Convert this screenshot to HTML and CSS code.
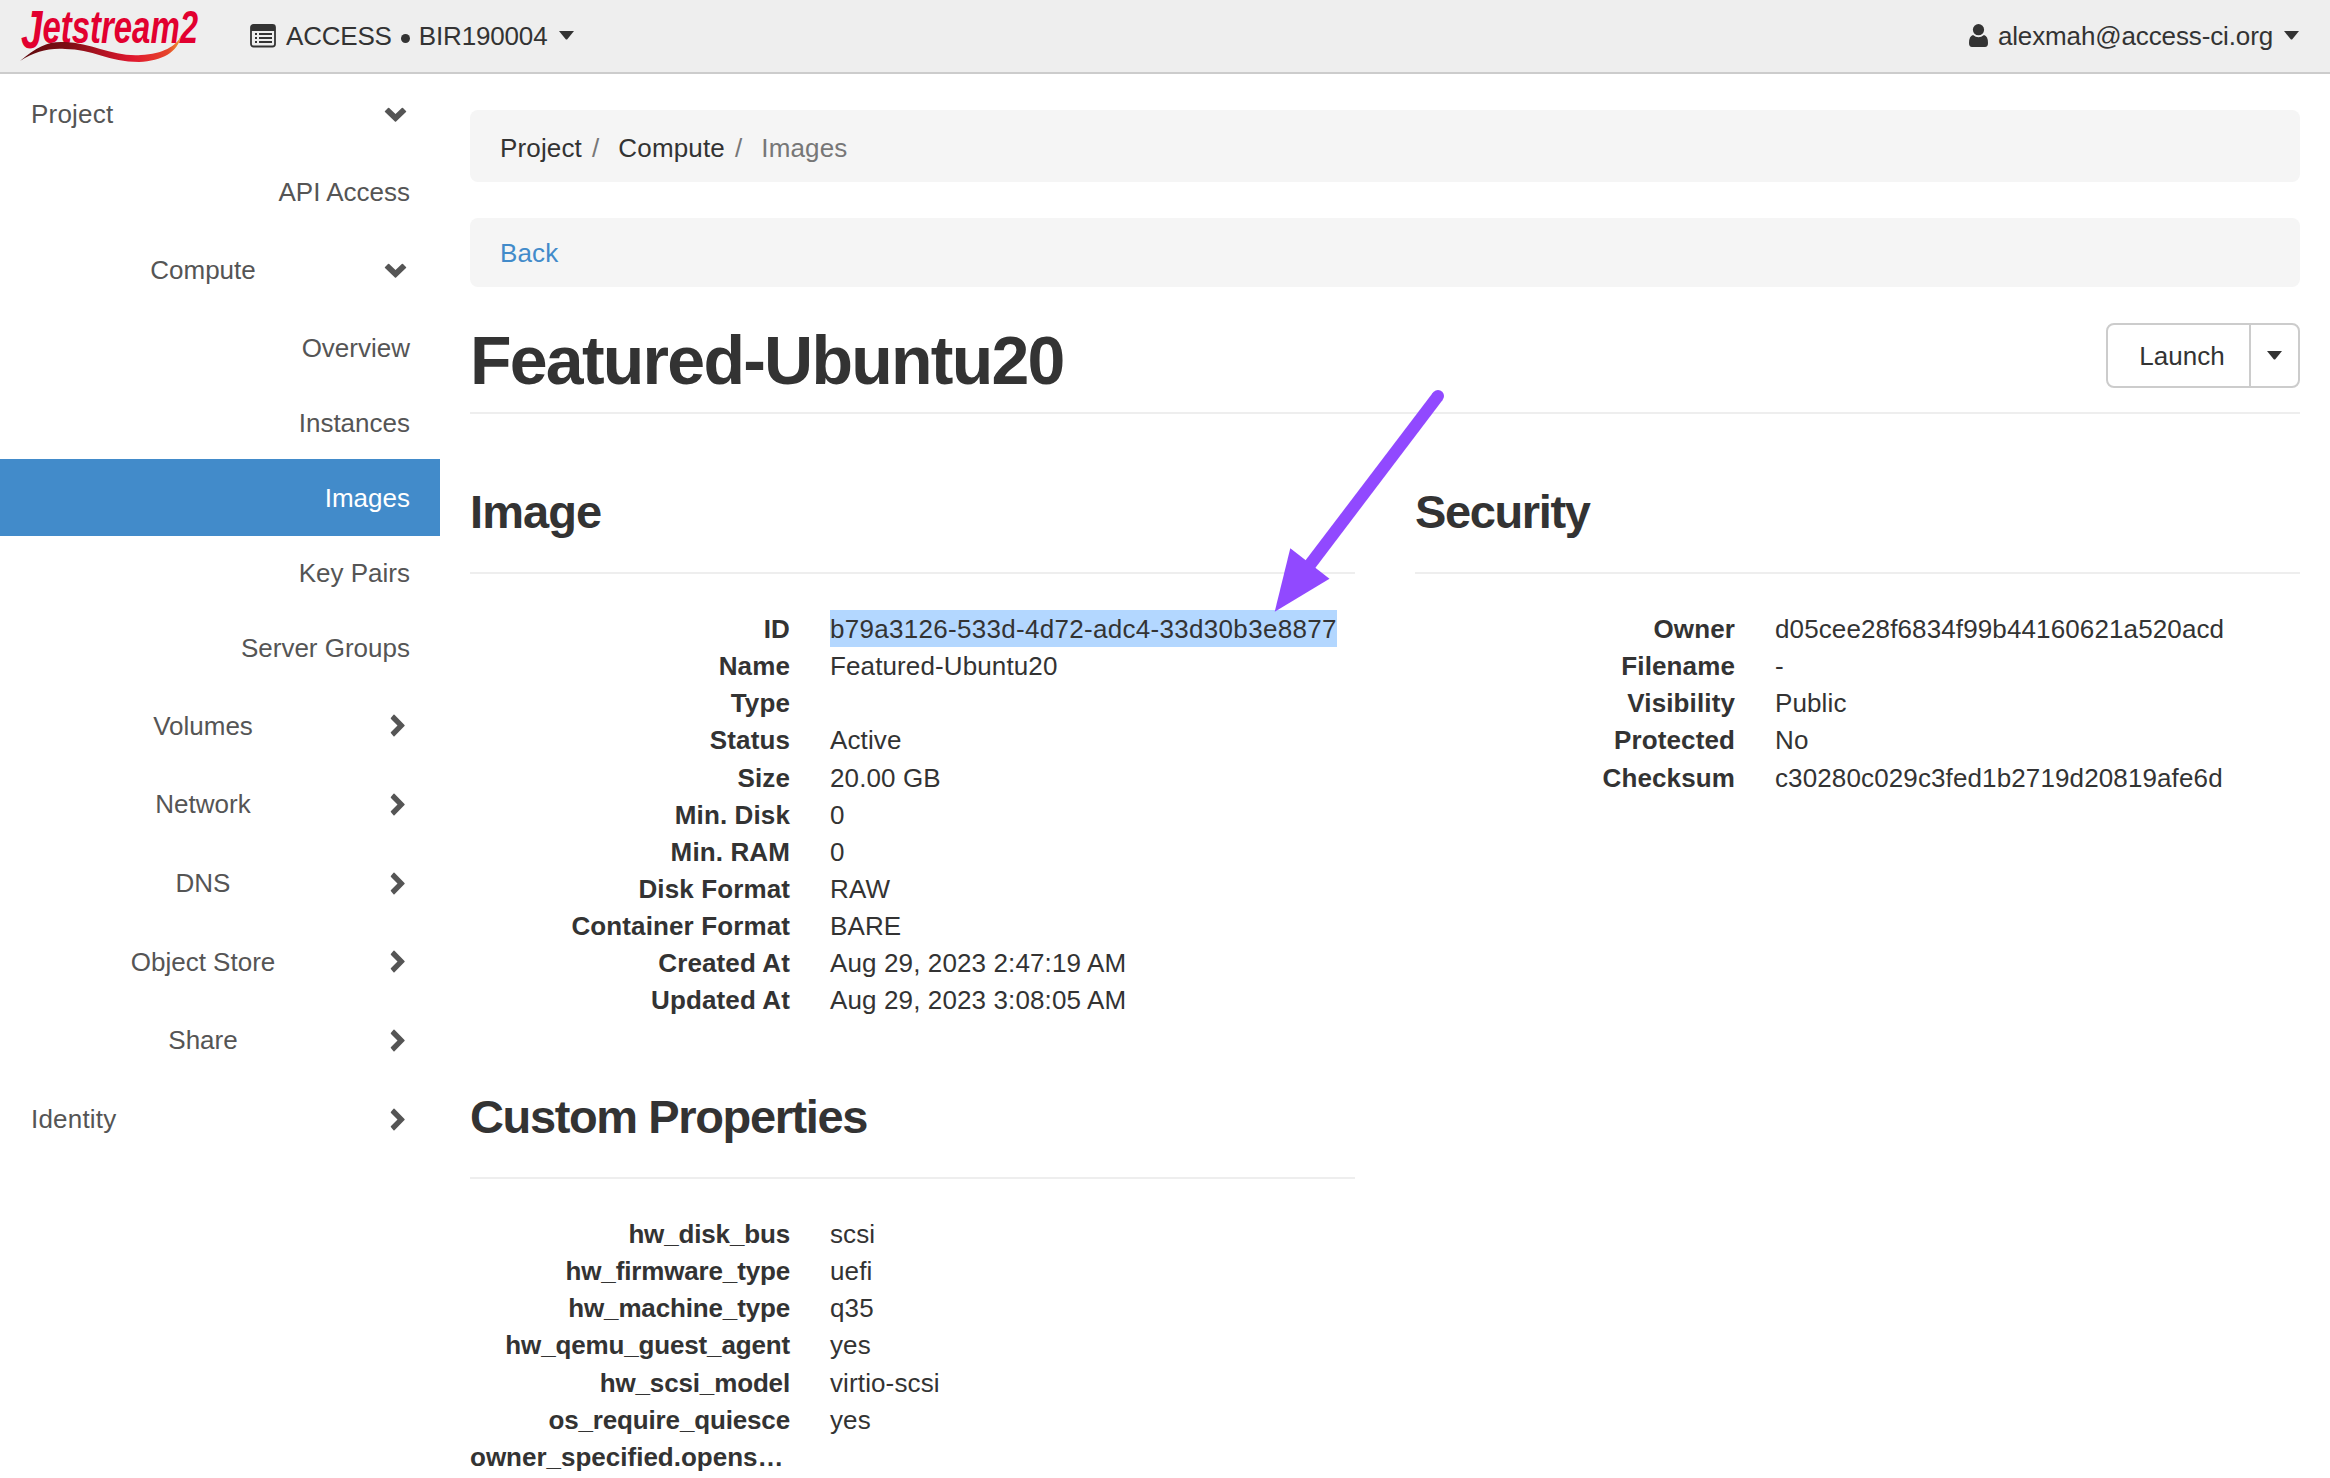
FILE: index.html
```html
<!DOCTYPE html>
<html lang="en">
<head>
<meta charset="utf-8">
<title>Featured-Ubuntu20 - Images</title>
<link rel="stylesheet" href="styles.css">
</head>
<body>
<svg class="defs" aria-hidden="true">
  <symbol id="down" viewBox="0 0 23 15"><path d="M1 4 4 1Q4.600 .4 5.200 1L11.500 7 17.800 1Q18.400 .4 19 1L22 4Q22.500 4.500 22 5L12.100 14.500Q11.500 15 10.900 14.500L1 5Q.5 4.500 1 4Z"/></symbol>
  <symbol id="right" viewBox="0 0 15 23"><path d="M1 18 7.500 11.500 1 5Q.4 4.400 1 3.800L3.500 .8Q4 .3 4.500 .8L14.500 10.900Q15 11.500 14.500 12.100L4.500 22.200Q4 22.700 3.500 22.200L1 19.200Q.4 18.600 1 18Z"/></symbol>
  <symbol id="caret" viewBox="0 0 15 9"><path d="M0 0H15L8.300 8.200Q7.500 9 6.700 8.200Z"/></symbol>
</svg>
<header class="navbar">
  <a class="brand" href="#">
    <svg width="190" height="72" viewBox="0 0 190 72" role="img" aria-label="Jetstream2">
      <defs><linearGradient id="swoosh"><stop offset="0" stop-color="#5e0b0e"/><stop offset=".3" stop-color="#7d0d14"/><stop offset=".7" stop-color="#e0182f"/><stop offset=".92" stop-color="#e6452b"/><stop offset="1" stop-color="#f0a030"/></linearGradient></defs>
      <text class="logo-text" x="3" y="43" textLength="177" lengthAdjust="spacingAndGlyphs"><tspan class="logo-j" dy="5">J</tspan><tspan dy="-5">etstream2</tspan></text>
      <path fill="url(#swoosh)" d="M2 61C20 46 30 41 47 42C74 43 95 57 123 55C145 54 158 46 163 36C160 52 144 61 121 62C91 62 74 49 47 49C29 48 17 52 2 61Z"/>
    </svg>
  </a>
  <a class="project" href="#">
    <svg width="26" height="24" viewBox="0 0 26 24"><rect x="1" y="1" width="24" height="21.500" rx="2.500" fill="none" stroke="#333" stroke-width="1.800"/><path fill="#333" d="M1 2H25V7H1ZM5 9h2v2H5zM9 9h13v2H9zM5 13h2v2H5zM9 13h13v2H9zM5 17h2v2H5zM9 17h13v2H9z"/></svg>
    <span class="domain">ACCESS</span><span class="dot"></span><span class="pname">BIR190004</span>
    <svg class="caret"><use href="#caret"/></svg>
  </a>
  <a class="user" href="#">
    <svg width="19" height="23" viewBox="0 0 19 23"><circle cx="9.500" cy="5.700" r="5.600"/><path d="M4 11Q9.500 15.500 15 11Q19 12 19 19Q19 23 16 23H3Q0 23 0 19Q0 12 4 11Z"/></svg>
    <span class="mail">alexmah@access-ci.org</span>
    <svg class="caret"><use href="#caret"/></svg>
  </a>
</header>
<div class="layout">
  <nav class="sidebar">
    <a class="panel top">Project<svg class="down"><use href="#down"/></svg></a>
    <ul class="single"><li>API Access</li></ul>
    <a class="panel"><span>Compute</span><svg class="down"><use href="#down"/></svg></a>
    <ul><li>Overview</li><li>Instances</li><li class="active">Images</li><li>Key Pairs</li><li>Server Groups</li></ul>
    <a class="panel"><span>Volumes</span><svg class="right"><use href="#right"/></svg></a>
    <a class="panel"><span>Network</span><svg class="right"><use href="#right"/></svg></a>
    <a class="panel"><span>DNS</span><svg class="right"><use href="#right"/></svg></a>
    <a class="panel"><span>Object Store</span><svg class="right"><use href="#right"/></svg></a>
    <a class="panel"><span>Share</span><svg class="right"><use href="#right"/></svg></a>
    <a class="panel top">Identity<svg class="right"><use href="#right"/></svg></a>
  </nav>
  <main class="content">
    <ol class="breadcrumb"><li>Project</li><li>Compute</li><li class="current">Images</li></ol>
    <div class="back"><a href="#">Back</a></div>
    <div class="title">
      <h1>Featured-Ubuntu20</h1>
      <div class="actions"><button>Launch</button><button class="toggle" aria-label="More"><svg class="caret"><use href="#caret"/></svg></button></div>
    </div>
    <div class="columns">
      <div>
        <section>
          <h3 class="short">Image</h3>
          <dl>
            <dt>ID</dt><dd><mark>b79a3126-533d-4d72-adc4-33d30b3e8877</mark></dd>
            <dt>Name</dt><dd>Featured-Ubuntu20</dd>
            <dt>Type</dt><dd></dd>
            <dt>Status</dt><dd>Active</dd>
            <dt>Size</dt><dd>20.00 GB</dd>
            <dt>Min. Disk</dt><dd>0</dd>
            <dt>Min. RAM</dt><dd>0</dd>
            <dt>Disk Format</dt><dd>RAW</dd>
            <dt>Container Format</dt><dd>BARE</dd>
            <dt>Created At</dt><dd>Aug 29, 2023 2:47:19 AM</dd>
            <dt>Updated At</dt><dd>Aug 29, 2023 3:08:05 AM</dd>
          </dl>
        </section>
        <section class="last">
          <h3>Custom Properties</h3>
          <dl class="custom">
            <dt>hw_disk_bus</dt><dd>scsi</dd>
            <dt>hw_firmware_type</dt><dd>uefi</dd>
            <dt>hw_machine_type</dt><dd>q35</dd>
            <dt>hw_qemu_guest_agent</dt><dd>yes</dd>
            <dt>hw_scsi_model</dt><dd>virtio-scsi</dd>
            <dt>os_require_quiesce</dt><dd>yes</dd>
            <dt class="long">owner_specified.opens…</dt><dd></dd>
          </dl>
        </section>
      </div>
      <section>
        <h3>Security</h3>
        <dl>
          <dt>Owner</dt><dd>d05cee28f6834f99b44160621a520acd</dd>
          <dt>Filename</dt><dd>-</dd>
          <dt>Visibility</dt><dd>Public</dd>
          <dt>Protected</dt><dd>No</dd>
          <dt>Checksum</dt><dd>c30280c029c3fed1b2719d20819afe6d</dd>
        </dl>
      </section>
    </div>
  </main>
</div>
<svg class="arrow" width="180" height="230" viewBox="0 0 180 230" aria-hidden="true">
  <path d="M163.200 6.300 35 175 44.500 183 172.800 13.700Z" fill="#9149ff"/><circle cx="168" cy="10" r="6" fill="#9149ff"/>
  <path d="M20.300 162.300 59.500 192.700 4.700 225.700Z" fill="#9149ff"/>
</svg>
</body>
</html>
```
FILE: styles.css
```css
* { box-sizing: border-box; }
body { margin: 0; width: 2330px; height: 1478px; overflow: hidden; position: relative; background: #fff; color: #333; font: 26px/37.14px "Liberation Sans", Arial, sans-serif; }
a { color: inherit; text-decoration: none; }
svg { display: block; flex: none; }
.defs { position: absolute; width: 0; height: 0; }
ul, ol, dl, dd { margin: 0; padding: 0; list-style: none; }
.caret { width: 15px; height: 9px; fill: #333; }

.navbar { display: flex; align-items: center; height: 74px; padding: 0 31px 0 18px; background: #eee; border-bottom: 2px solid #ccc; }
.brand { width: 232px; }
.brand svg { overflow: visible; }
.logo-text { font: italic bold 46px/1 "Liberation Sans Narrow", "Liberation Sans", sans-serif; fill: #e2002f; }
.logo-j { font-size: 54px; }
.project, .user { display: flex; align-items: center; }
.domain { margin-left: 10px; padding-top: 1px; letter-spacing: -.2px; }
.dot { width: 9px; height: 9px; margin: 5px 9px 0; border-radius: 50%; background: #333; }
.pname { margin-right: 11px; padding-top: 1px; letter-spacing: -.15px; }
.user { margin-left: auto; }
.user svg { fill: #333; }
.mail { margin: 0 11px 0 10px; padding-top: 1px; letter-spacing: -.13px; }

.layout { display: flex; }
.sidebar { width: 440px; flex: none; padding-top: 1px; color: #555; }
.panel { display: flex; align-items: center; justify-content: flex-end; height: 78.7px; padding-right: 35px; }
.panel span { width: 220px; margin-right: auto; margin-left: 93px; padding-top: 1px; text-align: center; }
.top { justify-content: space-between; padding-left: 31px; letter-spacing: .2px; }
.down { width: 23px; height: 15px; margin-right: -2px; fill: #555; }
.right { width: 15px; height: 23px; fill: #555; }
.sidebar ul { padding: 1px 0; }
.sidebar li { height: 75px; padding-right: 30px; line-height: 76px; text-align: right; }
.sidebar .single li { line-height: 74px; }
.sidebar .active { height: 77px; margin: -1px 0; line-height: 78px; color: #fff; background: #428bca; }

.content { flex: 1; padding: 36px 30px 0; }
.breadcrumb, .back { display: flex; align-items: center; padding: 0 30px; border-radius: 8px; background: #f5f5f5; letter-spacing: .15px; }
.breadcrumb { height: 72px; padding-top: 5px; }
.breadcrumb li + li::before { content: "/"; padding: 0 19px 0 10px; color: #777; }
.breadcrumb .current { color: #777; }
.back { height: 69px; margin-top: 36px; padding-top: 2px; color: #428bca; }
.title { display: flex; justify-content: space-between; height: 127px; padding-top: 36px; border-bottom: 2px solid #eee; }
h1 { margin: 0; font-size: 68px; line-height: 75px; letter-spacing: -1.75px; }
.actions { display: flex; width: 194px; height: 65px; border: 2px solid #ccc; border-radius: 8px; }
button { flex: 1; padding: 2px 0 0 7px; border: 0; background: none; color: inherit; font: inherit; }
.toggle { display: flex; align-items: center; justify-content: center; flex: none; width: 49px; padding: 0; border-left: 2px solid #ccc; }
.columns { display: grid; grid-template-columns: 885px 885px; column-gap: 60px; }
section { height: 605px; padding-top: 65px; }
.last { height: auto; }
h3 { height: 95px; margin: 0 0 36px; border-bottom: 2px solid #eee; font-size: 47px; line-height: 66px; letter-spacing: -1.38px; }
.short { letter-spacing: -.9px; }
dl { display: grid; grid-template-columns: 320px 1fr; column-gap: 40px; grid-auto-rows: 37.14px; line-height: 39px; }
dt { font-weight: bold; text-align: right; white-space: nowrap; letter-spacing: .12px; }
.custom dt { letter-spacing: -.15px; }
.custom .long { text-align: left; letter-spacing: 0; }
dd { white-space: nowrap; letter-spacing: .12px; }
mark { display: inline-block; height: 37px; background: #b3d7ff; color: inherit; letter-spacing: .3px; }
.arrow { position: absolute; left: 1270px; top: 386px; }
```
